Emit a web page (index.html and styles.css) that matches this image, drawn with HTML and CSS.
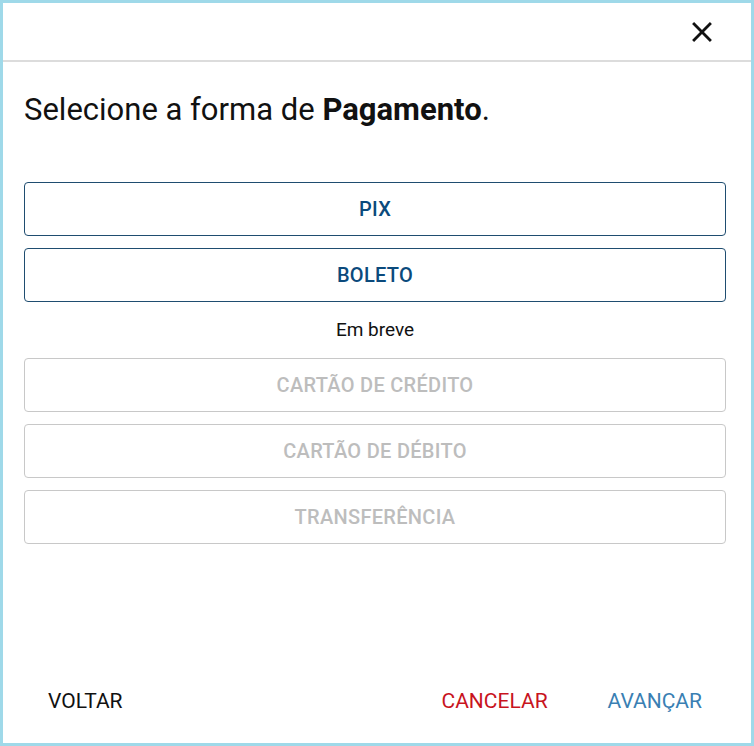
FILE: index.html
```html
<!DOCTYPE html>
<html lang="pt-BR">
<head>
<meta charset="utf-8">
<title>Forma de pagamento</title>
<link rel="stylesheet" href="styles.css">
</head>
<body>
<div class="dialog">
  <header class="dialog-header">
    <button class="close" aria-label="Fechar">
      <svg viewBox="0 0 24 24" width="34" height="34"><path d="M19 6.41L17.59 5 12 10.59 6.41 5 5 6.41 10.59 12 5 17.59 6.41 19 12 13.41 17.59 19 19 17.59 13.41 12z" fill="#111"/></svg>
    </button>
  </header>
  <main class="dialog-body">
    <h1 class="title">Selecione a forma de <strong>Pagamento</strong>.</h1>
    <div class="options">
      <button class="option">PIX</button>
      <button class="option">BOLETO</button>
      <p class="soon">Em breve</p>
      <button class="option disabled" disabled>CARTÃO DE CRÉDITO</button>
      <button class="option disabled" disabled>CARTÃO DE DÉBITO</button>
      <button class="option disabled" disabled>TRANSFERÊNCIA</button>
    </div>
  </main>
  <footer class="dialog-footer">
    <button class="text-btn back">VOLTAR</button>
    <div class="spacer"></div>
    <button class="text-btn cancel">CANCELAR</button>
    <button class="text-btn next">AVANÇAR</button>
  </footer>
</div>
</body>
</html>
```
FILE: styles.css
```css
* { box-sizing: border-box; }
html, body { margin: 0; padding: 0; background: #fff; }
body { font-family: Roboto, "Liberation Sans", sans-serif; color: #111; }

.dialog {
  height: 746px;
  width: 754px;
  border: 3px solid #9fd9e9;
  display: flex;
  flex-direction: column;
  background: #fff;
}

.dialog-header {
  height: 59px;
  border-bottom: 2px solid #dcdcdc;
  display: flex;
  justify-content: flex-end;
  align-items: center;
  padding-right: 32px;
}

.close {
  border: 0;
  background: none;
  padding: 0;
  width: 34px;
  height: 34px;
  display: flex;
  cursor: pointer;
}

.dialog-body {
  flex: 1;
  padding: 0 25px 0 21px;
}

.title {
  margin: 28px 0 0;
  font-size: 31px;
  font-weight: 400;
  line-height: 40px;
  color: #111;
}
.title strong { font-weight: 700; }

.options {
  margin-top: 52px;
  display: flex;
  flex-direction: column;
  gap: 12px;
}

.option {
  height: 54px;
  border: 1px solid #1f4d70;
  border-radius: 4px;
  background: #fff;
  color: #0b4a7c;
  font-family: Roboto, "Liberation Sans", sans-serif;
  font-size: 20px;
  font-weight: 500;
  letter-spacing: 0.3px;
}

.option.disabled {
  border-color: #c8c8c8;
  color: #bdbdbd;
}

.soon {
  margin: 0;
  text-align: center;
  font-size: 19px;
  line-height: 32px;
  color: #111;
}

.dialog-footer {
  height: 82px;
  display: flex;
  align-items: center;
  padding: 0 25px 2px 21px;
  gap: 12px;
}
.spacer { flex: 1; }

.text-btn {
  border: 0;
  background: none;
  padding: 8px 24px;
  font-family: Roboto, "Liberation Sans", sans-serif;
  font-size: 21px;
  font-weight: 400;
  cursor: pointer;
}
.back { color: #111; }
.cancel { color: #c8141e; }
.next { color: #3a7fb3; }
```
